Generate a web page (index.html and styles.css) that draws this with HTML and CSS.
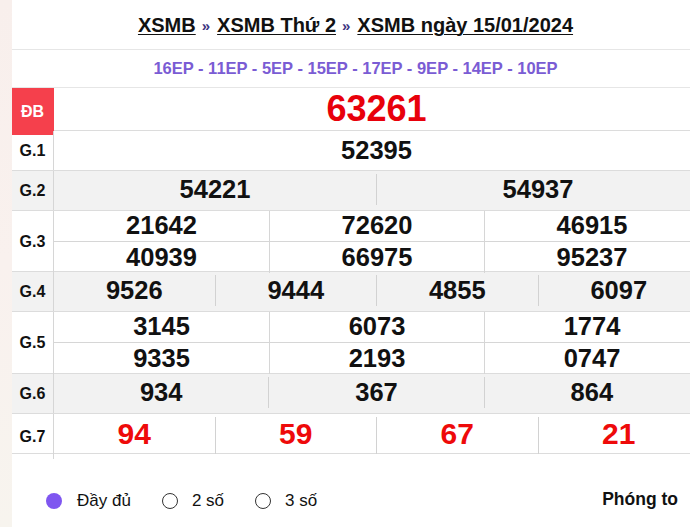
FILE: index.html
```html
<!DOCTYPE html>
<html lang="vi">
<head>
<meta charset="utf-8">
<title>XSMB ngày 15/01/2024</title>
<link rel="stylesheet" href="styles.css">
</head>
<body>
<div class="page">
  <div class="title">
    <a href="#">XSMB</a><span class="sep">»</span><a href="#">XSMB Thứ 2</a><span class="sep">»</span><a href="#">XSMB ngày 15/01/2024</a>
  </div>
  <div class="codes">16EP - 11EP - 5EP - 15EP - 17EP - 9EP - 14EP - 10EP</div>

  <div class="row row-db">
    <div class="label label-db">ĐB</div>
    <div class="vals"><div class="cell num-db">63261</div></div>
  </div>

  <div class="row row-g1">
    <div class="label">G.1</div>
    <div class="vals"><div class="cell">52395</div></div>
  </div>

  <div class="row row-gray">
    <div class="label">G.2</div>
    <div class="vals inset">
      <div class="cell">54221</div>
      <div class="cell">54937</div>
    </div>
  </div>

  <div class="row row-tall">
    <div class="label">G.3</div>
    <div class="grid3">
      <div class="sub top first">21642</div>
      <div class="sub top">72620</div>
      <div class="sub top">46915</div>
      <div class="sub first">40939</div>
      <div class="sub">66975</div>
      <div class="sub">95237</div>
    </div>
  </div>

  <div class="row row-gray">
    <div class="label">G.4</div>
    <div class="vals inset">
      <div class="cell">9526</div>
      <div class="cell">9444</div>
      <div class="cell">4855</div>
      <div class="cell">6097</div>
    </div>
  </div>

  <div class="row row-tall row-g5">
    <div class="label">G.5</div>
    <div class="grid3">
      <div class="sub top first">3145</div>
      <div class="sub top">6073</div>
      <div class="sub top">1774</div>
      <div class="sub first">9335</div>
      <div class="sub">2193</div>
      <div class="sub">0747</div>
    </div>
  </div>

  <div class="row row-gray">
    <div class="label">G.6</div>
    <div class="vals inset">
      <div class="cell">934</div>
      <div class="cell">367</div>
      <div class="cell">864</div>
    </div>
  </div>

  <div class="row row-g7">
    <div class="label">G.7</div>
    <div class="vals inset red">
      <div class="cell">94</div>
      <div class="cell">59</div>
      <div class="cell">67</div>
      <div class="cell">21</div>
    </div>
  </div>

  <div class="options">
    <div class="radios">
      <label class="opt"><span class="radio on"></span>Đầy đủ</label>
      <label class="opt"><span class="radio"></span>2 số</label>
      <label class="opt"><span class="radio"></span>3 số</label>
    </div>
    <div class="zoom">Phóng to</div>
  </div>
</div>
</body>
</html>
```

FILE: styles.css
```css
html, body {
  margin: 0;
  padding: 0;
  overflow: hidden;
}
body {
  background: linear-gradient(180deg, #f8efec 0%, #f9f1ee 50%, #f7f4ee 100%);
  font-family: "Liberation Sans", Arial, sans-serif;
  color: #000;
  height: 527px;
}
.page {
  margin-left: 12px;
  width: 687px;
  background: #fff;
  height: 527px;
}
.title {
  border-bottom: 1px solid #e6e6e6;
  display: flex;
  align-items: center;
  justify-content: center;
  padding-top: 1px;
  box-sizing: border-box;
  height: 50px;
  font-size: 20px;
  font-weight: bold;
}
.title a {
  color: #111;
  text-decoration: underline;
  text-underline-offset: 2px;
  text-decoration-thickness: 1px;
}
.title .sep {
  color: #3d3480;
  font-size: 15px;
  margin: 0 7px 0 6px;
}
.codes {
  height: 38px;
  box-sizing: border-box;
  border-bottom: 1px solid #e6e6e6;
  display: flex;
  align-items: center;
  justify-content: center;
  color: #7a5cd4;
  font-size: 16.5px;
  font-weight: bold;
}
.row {
  display: grid;
  grid-template-columns: 42px 1fr;
  border-bottom: 1px solid #dcdcdc;
  height: 40px;
  box-sizing: border-box;
}
.row-db { height: 43px; }
.row-gray { background: #f2f2f2; }
.row-tall { height: 61px; }
.row-g5 { height: 62px; }
.label {
  border-right: 1px solid #d6d6d6;
  display: flex;
  align-items: center;
  justify-content: center;
  font-size: 16px;
  font-weight: bold;
  color: #111;
}
.label-db {
  background: #f5404c;
  color: #fff;
  border-right-color: #f5404c;
}
.vals {
  display: flex;
}
.vals.inset {
  padding: 3px 0 5px;
}
.cell {
  flex: 1;
  display: flex;
  align-items: center;
  justify-content: center;
  font-size: 25.5px;
  font-weight: bold;
  color: #111;
}
.vals.inset .cell + .cell {
  border-left: 1px solid #d2d2d2;
}
.num-db {
  color: #e8000b;
  font-size: 36px;
  padding-bottom: 5px;
}
.red .cell {
  color: #ee0a0a;
  font-size: 30px;
  padding-bottom: 3px;
}
.grid3 {
  display: grid;
  grid-template-columns: 1fr 1fr 1fr;
  grid-template-rows: 1fr 1fr;
}
.sub {
  display: flex;
  align-items: center;
  justify-content: center;
  font-size: 25.5px;
  font-weight: bold;
  color: #111;
  border-left: 1px solid #d6d6d6;
  padding-bottom: 1px;
}
.sub.first { border-left: none; }
.sub.top { border-bottom: 1px solid #d6d6d6; }
.options {
  display: flex;
  justify-content: space-between;
  align-items: center;
  padding: 37px 21px 0 34px;
}
.radios {
  display: flex;
  align-items: center;
}
.opt {
  display: flex;
  align-items: center;
  font-size: 17px;
  color: #111;
  margin-right: 31px;
}
.radio {
  width: 14px;
  height: 14px;
  border: 1px solid #333;
  border-radius: 50%;
  margin-right: 14px;
  box-sizing: content-box;
}
.radio.on {
  background: #7f56f0;
  width: 16px;
  height: 16px;
  border: 0;
  margin-right: 15px;
}
.zoom {
  font-size: 17.5px;
  font-weight: bold;
  color: #111;
  margin-top: -4px;
}
```
